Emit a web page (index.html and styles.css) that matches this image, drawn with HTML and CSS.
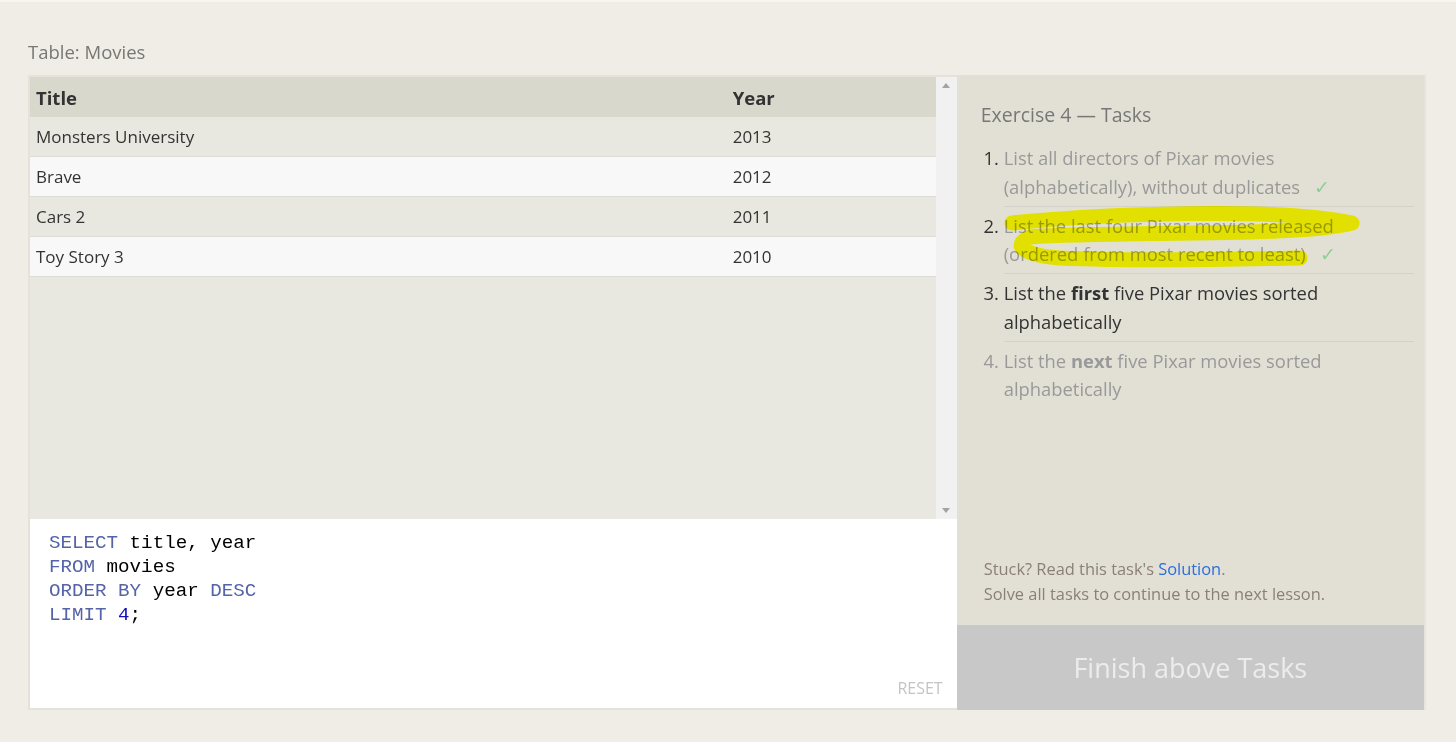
FILE: index.html
```html
<!DOCTYPE html>
<html>
<head>
<meta charset="utf-8">
<link rel="stylesheet" href="styles.css">
</head>
<body>
<div class="page">
  <div class="table-label">Table: Movies</div>
  <div class="exercise">
    <div class="left">
      <div class="results">
        <div class="table-wrap">
          <table class="movies">
            <thead><tr><th class="c-title">Title</th><th class="c-year">Year</th></tr></thead>
            <tbody>
              <tr class="odd"><td>Monsters University</td><td>2013</td></tr>
              <tr class="even"><td>Brave</td><td>2012</td></tr>
              <tr class="odd"><td>Cars 2</td><td>2011</td></tr>
              <tr class="even"><td>Toy Story 3</td><td>2010</td></tr>
            </tbody>
          </table>
        </div>
        <div class="scrollbar">
          <div class="arrow up"></div>
          <div class="arrow down"></div>
        </div>
      </div>
      <div class="editor">
        <pre class="code"><span class="kw">SELECT</span> title, year
<span class="kw">FROM</span> movies
<span class="kw">ORDER BY</span> year <span class="kw">DESC</span>
<span class="kw">LIMIT</span> <span class="num">4</span>;</pre>
        <div class="reset">RESET</div>
      </div>
    </div>
    <div class="right">
      <div class="tasks">
        <h3 class="tasks-title">Exercise 4 — Tasks</h3>
        <ol class="task-list">
          <li class="done">List all directors of Pixar movies (alphabetically), without duplicates<span class="check">✓</span></li>
          <li class="done">List the last four Pixar movies released (ordered from most recent to least)<span class="check">✓</span></li>
          <li class="current">List the <b>first</b> five Pixar movies sorted alphabetically</li>
          <li class="todo">List the <b>next</b> five Pixar movies sorted alphabetically</li>
        </ol>
        <div class="help">
          <div>Stuck? Read this task's <a class="link">Solution</a>.</div>
          <div>Solve all tasks to continue to the next lesson.</div>
        </div>
      </div>
      <div class="finish">Finish above Tasks</div>
    </div>
  </div>
</div>
<svg class="scribble" width="1456" height="742" viewBox="0 0 1456 742">
  <path d="M1012,223 C1100,214 1280,207 1352,223 C1300,237 1120,231 1030,237 C1012,245 1022,255 1060,258 C1150,262 1240,259 1300,258" fill="none" stroke="#ffff00" stroke-width="15" stroke-linecap="round" stroke-linejoin="round"/>
</svg>
</body>
</html>
```
FILE: styles.css
```css
html, body { margin: 0; padding: 0; }
body {
  background: #efede5;
  border-top: 2px solid #f6f5f1;
  font-family: "Open Sans", "Noto Sans", sans-serif;
  color: #333;
  position: relative;
  height: 740px;
  overflow: hidden;
}
.page { padding: 37px 30px 0 28px; }
.table-label {
  font-size: 18.5px;
  color: #777;
  line-height: 26px;
  margin-bottom: 10px;
}
.exercise {
  display: flex;
  width: 1398px;
  height: 635px;
  box-sizing: border-box;
  border: 2px solid #e4e2d9;
  border-right: none;
}
.left {
  width: 928px;
  display: flex;
  flex-direction: column;
}
.results {
  height: 442px;
  display: flex;
  background: #e9e8e0;
}
.table-wrap { flex: 1; }
.movies {
  width: 100%;
  border-collapse: collapse;
  font-size: 17px;
}
.movies th {
  background: #d9d8cc;
  text-align: left;
  font-weight: 700;
  font-size: 18.5px;
  height: 40px;
  padding: 0 6px;
  color: #333;
}
.movies th.c-year { width: 197px; }
.movies td {
  height: 39px;
  padding: 0 6px;
  border-bottom: 1px solid #dcdcd6;
  color: #333;
}
.movies tr.odd td { background: #e9e8e0; }
.movies tr.even td { background: #f8f8f8; }
.scrollbar {
  width: 21px;
  background: #f1f1f1;
  position: relative;
}
.arrow {
  position: absolute;
  left: 6px;
  width: 0; height: 0;
  border-left: 4px solid transparent;
  border-right: 4px solid transparent;
}
.arrow.up { top: 6px; border-bottom: 5px solid #a3a3a3; }
.arrow.down { bottom: 6px; border-top: 5px solid #a3a3a3; }
.editor {
  flex: 1;
  background: #fff;
  position: relative;
  border-left: 1px solid #e0e2d8;
  margin-left: -1px;
}
.code {
  margin: 0;
  padding: 12px 0 0 19px;
  font-family: "Liberation Mono", "DejaVu Sans Mono", monospace;
  font-size: 19.2px;
  line-height: 24px;
  color: #000;
}
.kw { color: #5563a8; }
.num { color: #1010c0; }
.reset {
  position: absolute;
  right: 14px;
  bottom: 9px;
  font-size: 16px;
  color: #c4c4c4;
}
.right {
  width: 468px;
  display: flex;
  flex-direction: column;
  border-right: 2px solid #e6e4dc;
  margin-top: -2px;
  margin-bottom: -2px;
}
.tasks {
  flex: 1;
  background: #e2e0d5;
  padding: 27px 10px 0 24px;
  display: flex;
  flex-direction: column;
}
.tasks-title {
  margin: 0;
  font-weight: 400;
  font-size: 19.5px;
  color: #777;
  line-height: 26px;
}
.task-list {
  margin: 16px 0 0 0;
  padding: 0 0 0 23px;
  font-size: 18.4px;
  line-height: 28.5px;
}
.task-list li {
  padding: 0 20px 4.5px 0;
  margin-bottom: 5px;
  border-bottom: 1px solid #d4d2c8;
  color: #999;
}
.task-list li.done::marker { color: #333; }
.task-list li.current { color: #333; }
.task-list li.todo { border-bottom: none; color: #999; }
.check { color: #8fcf95; margin-left: 14px; font-size: 19px; }
.help {
  margin-top: auto;
  margin-bottom: 19px;
  padding-left: 3px;
  font-size: 16.4px;
  line-height: 25px;
  color: #8a8078;
}
.link { color: #2a6de0; }
.finish {
  height: 85px;
  background: #c8c8c8;
  color: #ececec;
  font-size: 27px;
  display: flex;
  align-items: center;
  justify-content: center;
}
.scribble {
  position: absolute;
  left: 0; top: -2px;
  pointer-events: none;
  mix-blend-mode: multiply;
}
```
